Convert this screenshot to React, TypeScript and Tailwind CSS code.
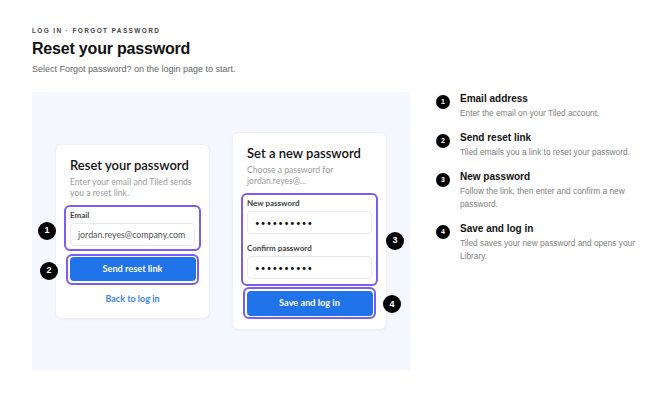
import React from "react";

const Badge = ({ n, className = "" }: { n: number; className?: string }) => (
  <div
    className={`absolute flex h-[18px] w-[18px] items-center justify-center rounded-full bg-black text-[9px] font-bold text-white ${className}`}
    style={{ fontFamily: '"Liberation Sans", Arial, sans-serif' }}
  >
    {n}
  </div>
);

const cardFont = { fontFamily: 'Lato, "Noto Sans", sans-serif' };

const Field = ({ label, value, dots }: { label: string; value: string; dots?: boolean }) => (
  <div>
    <div className="text-[8px] font-bold leading-[10px] text-[#3f3f46]">{label}</div>
    <div className="mt-[3.5px] flex h-[23px] items-center rounded-[4px] border border-[#e6e8ee] bg-white pl-[7px]">
      {dots ? (
        <span className="text-[8px] tracking-[1.2px] text-[#111]">••••••••••</span>
      ) : (
        <span className="text-[8.8px] text-[#52525b]">{value}</span>
      )}
    </div>
  </div>
);

const ListItem = ({ n, title, desc }: { n: number; title: string; desc: string }) => (
  <div className="flex gap-[10px]">
    <div className="mt-[3px] flex h-[14px] w-[14px] shrink-0 items-center justify-center rounded-full bg-black text-[7px] font-bold text-white">
      {n}
    </div>
    <div className="w-[180px]">
      <div className="text-[10px] font-bold leading-[14px] text-[#111]">{title}</div>
      <div className="mt-[1px] text-[8.3px] leading-[13px] text-[#808080]">{desc}</div>
    </div>
  </div>
);

export default function App() {
  return (
    <div
      className="relative h-[402px] w-[670px] overflow-hidden bg-white pl-[32px] pt-[27px]"
      style={{ fontFamily: '"Liberation Sans", Arial, sans-serif' }}
    >
      <div className="text-[6.5px] font-bold uppercase leading-[8px] tracking-[0.21em] text-[#444]">
        Log in · Forgot password
      </div>
      <h1 className="mt-[4px] text-[16px] font-bold leading-[20px] tracking-[-0.012em] text-[#111]">
        Reset your password
      </h1>
      <p className="mt-[4px] text-[9px] leading-[12px] text-[#666]">
        Select Forgot password? on the login page to start.
      </p>

      <div className="mt-[17px] flex">
        <div className="flex h-[278px] w-[378px] items-center justify-center gap-[22px] bg-[#f4f7fd]" style={cardFont}>
          {/* Left card */}
          <div className="w-[155px] rounded-[7px] border border-[#eef0f4] bg-white px-[14px] pb-[13px] pt-[12px] shadow-[0_1px_2px_rgba(0,0,0,0.04)]">
            <div className="text-[13px] font-semibold leading-[16px] text-[#111]">Reset your password</div>
            <div className="mt-[4px] text-[8.6px] leading-[11px] text-[#9b9ba3]">
              Enter your email and Tiled sends you a reset link.
            </div>
            <div className="relative -mx-[6px] mt-[6px] rounded-[6px] border-2 border-[#7b5cf6] px-[4px] pb-[3px] pt-[3px]">
              <Field label="Email" value="jordan.reyes@company.com" />
              <Badge n={1} className="left-[-28px] top-[15px]" />
            </div>
            <div className="relative -mx-[4px] mt-[2.5px] rounded-[6px] border-2 border-[#7b5cf6] p-[1.5px]">
              <div className="flex h-[24px] items-center justify-center rounded-[4px] bg-[#2173e9] text-[9.2px] font-bold text-white">
                Send reset link
              </div>
              <Badge n={2} className="left-[-28px] top-[6px]" />
            </div>
            <div className="mt-[8px] text-center text-[9px] font-bold leading-[12px] text-[#3d84ec]">
              Back to log in
            </div>
          </div>

          {/* Right card */}
          <div className="w-[155px] rounded-[7px] border border-[#eef0f4] bg-white px-[14px] pb-[10px] pt-[12px] shadow-[0_1px_2px_rgba(0,0,0,0.04)]">
            <div className="text-[13px] font-semibold leading-[16px] text-[#111]">Set a new password</div>
            <div className="mt-[4px] text-[8.6px] leading-[11px] text-[#9b9ba3]">
              Choose a password for
              <br />
              jordan.reyes@...
            </div>
            <div className="relative -mx-[6px] mt-[6px] rounded-[6px] border-2 border-[#7b5cf6] px-[4px] pb-[4.5px] pt-[3px]">
              <Field label="New password" value="" dots />
              <div className="mt-[8.5px]">
                <Field label="Confirm password" value="" dots />
              </div>
              <Badge n={3} className="right-[-28px] top-[37px]" />
            </div>
            <div className="relative -mx-[4px] mt-[1.5px] rounded-[6px] border-2 border-[#7b5cf6] p-[1.5px]">
              <div className="flex h-[25px] items-center justify-center rounded-[4px] bg-[#2173e9] text-[9.2px] font-bold text-white">
                Save and log in
              </div>
              <Badge n={4} className="right-[-27px] top-[6px]" />
            </div>
          </div>
        </div>

        <div className="ml-[26px] mt-[0px] flex flex-col gap-[11px]">
          <ListItem n={1} title="Email address" desc="Enter the email on your Tiled account." />
          <ListItem n={2} title="Send reset link" desc="Tiled emails you a link to reset your password." />
          <ListItem n={3} title="New password" desc="Follow the link, then enter and confirm a new password." />
          <ListItem n={4} title="Save and log in" desc="Tiled saves your new password and opens your Library." />
        </div>
      </div>
    </div>
  );
}
